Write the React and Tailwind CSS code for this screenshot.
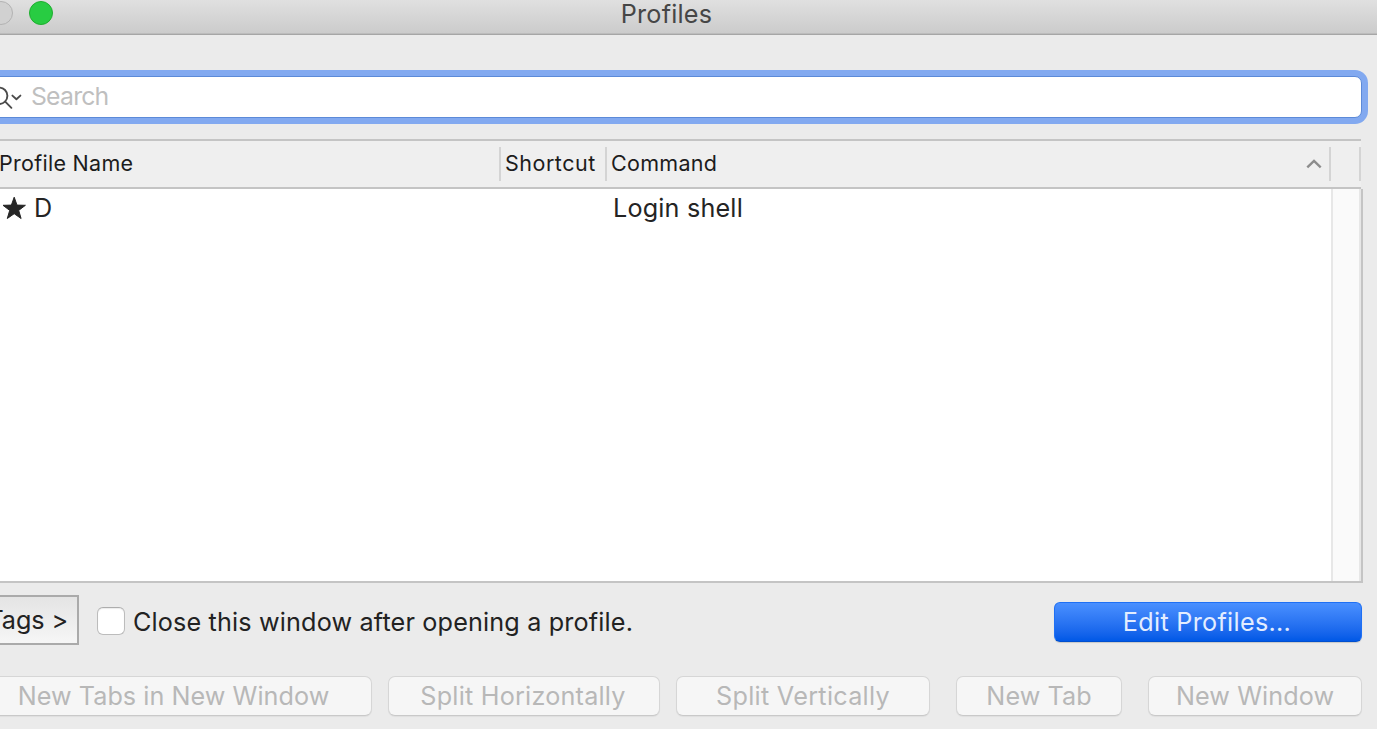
function TitleBar() {
  return (
    <header className="relative flex h-[35px] shrink-0 items-start justify-center border-b border-[#a6a6a6] bg-linear-to-b from-[#e0e0e0] to-[#cbcbcb] shadow-[inset_0_-1px_0_#bcbcbc]">
      <div className="absolute top-[1px] left-[-11px] flex gap-4">
        <span className="size-6 rounded-full border border-[#b3b3b3] bg-[#d1d1d1]" />
        <span className="size-6 rounded-full border border-[#1fae2f] bg-[#28cc42]" />
      </div>
      <h1 className="ml-[-44px] pt-[1px] text-[25.2px] leading-[27px] tracking-[0.2px] text-[#464646]">Profiles</h1>
    </header>
  );
}

function SearchField() {
  return (
    <div className="mt-[35px] mr-[9px] -ml-5 h-[54px] shrink-0 rounded-[13px] bg-[#82a9f0] p-[6px]">
      <div className="flex h-[42px] items-center rounded-[7px] border border-[#5c8ad8] bg-white pl-[7px]">
        <svg className="h-8 w-8 shrink-0" viewBox="0 0 32 32" fill="none" stroke="#4b4b4b" strokeWidth="1.9" strokeLinecap="round">
          <circle cx="5.2" cy="14.8" r="8.2" />
          <path d="M11.2 20.6L17.4 26.8" />
          <path d="M18.4 14.6L22.4 18.2L26.4 14.6" strokeLinejoin="round" />
        </svg>
        <span className="mb-[2px] ml-[5px] text-[24.8px] leading-[30px] tracking-[-0.8px] text-[#bfbfbf]">Search</span>
      </div>
    </div>
  );
}

function Divider() {
  return <span className="h-[34px] w-[2px] shrink-0 bg-[#d4d4d4]" />;
}

function ProfileTable() {
  return (
    <section className="mt-[15px] flex h-[444px] w-[1363px] shrink-0 flex-col">
      <div className="flex h-[50px] w-[1361px] shrink-0 items-center border-y-2 border-[#c4c4c4] bg-[#efefef] text-[21.5px] leading-[26px] text-[#1c1c1c]">
        <span className="w-[499px] pb-[2px] -indent-[1px] tracking-[0.28px]">Profile Name</span>
        <Divider />
        <span className="w-[104px] pb-[2px] pl-1 tracking-[0.5px]">Shortcut</span>
        <Divider />
        <span className="flex-1 pb-[2px] pl-1 tracking-[0.3px]">Command</span>
        <svg className="mr-[7px] h-[10px] w-4" viewBox="0 0 16 10" fill="none" stroke="#8c8c8c" strokeWidth="2.4">
          <path d="M1.3 8.4L8 2L14.7 8.4" />
        </svg>
        <Divider />
        <span className="w-7 shrink-0" />
        <Divider />
      </div>
      <div className="flex flex-1 border-r-2 border-b-2 border-[#c4c4c4] bg-white">
        <div className="flex h-[38px] flex-1 items-center text-[25.2px] leading-[30px] text-[#242424]">
          <svg className="ml-[2px] h-6 w-6" viewBox="0 0 24 24" fill="#262626" stroke="#262626" strokeWidth="1" strokeLinejoin="round">
            <path d="M12.2 1.2L15 9.1L23.4 9.3L16.7 14.4L19.1 22.5L12.2 17.7L5.3 22.5L7.7 14.4L1 9.3L9.4 9.1Z" />
          </svg>
          <span className="ml-2 w-[579px]">D</span>
          <span className="tracking-[0.18px]">Login shell</span>
        </div>
        <div className="w-[30px] border-x-2 border-[#e7e7e7] bg-[#fafafa]" />
      </div>
    </section>
  );
}

function ActionButton({ className, children }) {
  return (
    <button
      disabled
      className={`${className} h-10 shrink-0 rounded-[7px] border border-[#d6d6d6] border-b-[#c9c9c9] bg-[#f6f6f6] text-[25.2px] leading-[38px] whitespace-nowrap text-[#b8b8b8] shadow-[0_1px_1px_rgba(0,0,0,0.05)]`}
    >
      {children}
    </button>
  );
}

export default function App() {
  return (
    <main className="flex h-[729px] w-[1377px] flex-col overflow-hidden bg-[#ebebeb] font-['Inter',sans-serif]">
      <TitleBar />
      <SearchField />
      <ProfileTable />
      <div className="mt-3 flex h-[50px] shrink-0 items-center text-[25.2px] leading-[30px] text-[#222]">
        <button className="-ml-5 flex h-[50px] w-[99px] items-center justify-end border-2 border-[#aaa] bg-linear-to-b from-[#e4e4e4] to-[#f6f6f6] pr-[9px] tracking-[-0.1px] whitespace-nowrap">Tags &gt;</button>
        <label className="mt-[3px] ml-[18px] flex items-center gap-2">
          <span className="-mt-px size-7 rounded-[6px] border border-[#bcbcbc] border-t-[#adadad] bg-white shadow-[inset_0_1px_1px_rgba(0,0,0,0.08)]" />
          <span className="tracking-[0.16px]">Close this window after opening a profile.</span>
        </label>
        <button className="mt-1 mr-[15px] ml-auto h-10 w-[308px] rounded-[6px] border border-[#1f70f4] border-b-[#004fce] bg-linear-to-b from-[#4a90ff] to-[#0058e6] pr-[2px] leading-[38px] tracking-[0.3px] text-[#e3edff] shadow-[0_1px_1px_rgba(0,0,0,0.15)]">Edit Profiles...</button>
      </div>
      <div className="mt-[31px] flex shrink-0">
        <ActionButton className="-ml-[25px] w-[397px] tracking-[0.04px]">New Tabs in New Window</ActionButton>
        <ActionButton className="ml-4 w-[272px] pr-[2px] tracking-[0.22px]">Split Horizontally</ActionButton>
        <ActionButton className="ml-4 w-[254px] tracking-[0.28px]">Split Vertically</ActionButton>
        <ActionButton className="ml-[26px] w-[166px] tracking-[0.06px]">New Tab</ActionButton>
        <ActionButton className="ml-[26px] w-[214px] tracking-[0.08px]">New Window</ActionButton>
      </div>
    </main>
  );
}
